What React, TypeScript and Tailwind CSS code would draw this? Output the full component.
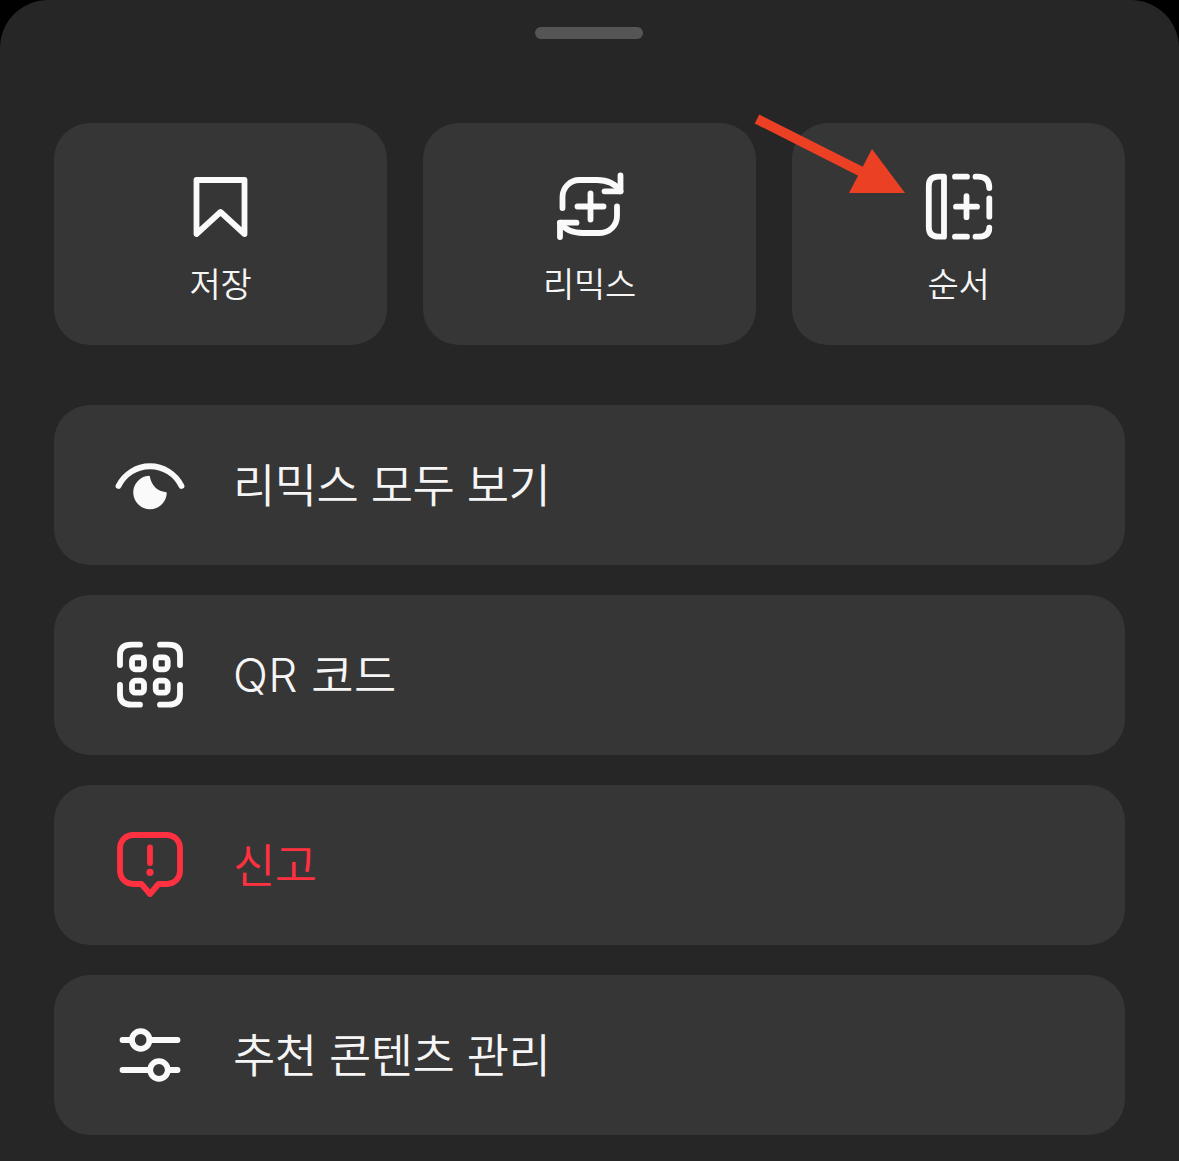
const SHEET_FONT = "font-['Inter','Noto_Sans_CJK_KR',sans-serif]";

function Icon({ children, color = "#fafafa" }: { children: React.ReactNode; color?: string }) {
  return (
    <svg
      viewBox="0 0 72 72"
      fill="none"
      stroke={color}
      strokeWidth="5.8"
      strokeLinecap="round"
      strokeLinejoin="round"
      className="w-[72px] h-[72px] shrink-0"
    >
      {children}
    </svg>
  );
}

const BookmarkIcon = () => (
  <Icon>
    <path d="M11.5 9H59.5V63L35.5 41L11.5 63Z" />
  </Icon>
);

const RemixIcon = () => (
  <Icon>
    <path d="M8.5 37V26A17 17 0 0 1 25.5 9H43Q59 9 66.5 20.3" />
    <path d="M66.5 4.5V20.3H50.5" />
    <path d="M63 35.5V45A17 17 0 0 1 46 62H29Q13 62 6 51.7" />
    <path d="M6 66V51.7H22.5" />
    <path d="M23.5 35.5H49.5M36.5 22.5V48.5" />
  </Icon>
);

const SequenceIcon = () => (
  <Icon>
    <path d="M21 5.7H15.5Q5.8 5.7 5.8 15V56Q5.8 65.7 15.5 65.7H21Z" />
    <path d="M32 5.7H44M32 65.7H44" />
    <path d="M52.5 5.7H55Q66.3 5.7 66.3 17" />
    <path d="M66.3 27.3V45.7" />
    <path d="M66.3 56.7Q66.3 65.7 55 65.7H52.5" />
    <path d="M33 35.7H54M43.5 25.2V46.2" />
  </Icon>
);

const EyeIcon = () => (
  <Icon>
    <path d="M4.5 37A35 35 0 0 1 67.5 37" />
    <path
      d="M35 27.5A16 16 0 1 0 52 44C42 43 37 37 35 27.5Z"
      fill="#fafafa"
      strokeWidth="1.5"
    />
  </Icon>
);

const QrIcon = () => (
  <Icon>
    <path d="M6 26V16Q6 5.7 17.7 5.7H26" />
    <path d="M46 5.7H54.5Q66 5.7 66 16V26" />
    <path d="M6 46V55.5Q6 65.7 17.7 65.7H26" />
    <path d="M46 65.7H54.5Q66 65.7 66 55.5V46" />
    <rect x="18" y="18.3" width="12" height="12" rx="3.5" />
    <rect x="41.7" y="18.3" width="12" height="12" rx="3.5" />
    <rect x="18" y="41.7" width="12" height="12" rx="3.5" />
    <rect x="41.7" y="41.7" width="12" height="12" rx="3.5" />
  </Icon>
);

const ReportIcon = () => (
  <Icon color="#ff3040">
    <path d="M19 6H53A13 13 0 0 1 66 19V42A13 13 0 0 1 53 55H44.5L36 65L27.5 55H19A13 13 0 0 1 6 42V19A13 13 0 0 1 19 6Z" />
    <path d="M36 18.5V34" />
    <circle cx="36" cy="43.3" r="3.6" fill="#ff3040" stroke="none" />
  </Icon>
);

const SlidersIcon = () => (
  <Icon>
    <path d="M8.5 21H17.8M35.6 21H63.5" />
    <circle cx="26.7" cy="21" r="8.8" />
    <path d="M8.5 51H36.1M53.9 51H63.5" />
    <circle cx="45" cy="51" r="8.8" />
  </Icon>
);

const TILES = [
  { label: "저장", icon: BookmarkIcon },
  { label: "리믹스", icon: RemixIcon },
  { label: "순서", icon: SequenceIcon },
];

const ROWS = [
  { label: "리믹스 모두 보기", icon: EyeIcon, color: "text-[#f5f5f5] tracking-[-0.55px]" },
  { label: "QR 코드", icon: QrIcon, color: "text-[#f5f5f5] tracking-[0.4px]" },
  { label: "신고", icon: ReportIcon, color: "text-[#ff3040] tracking-[-0.55px]" },
  { label: "추천 콘텐츠 관리", icon: SlidersIcon, color: "text-[#f5f5f5] tracking-[-0.55px]" },
];

export default function App() {
  return (
    <div className={`relative w-[1179px] h-[1161px] overflow-hidden bg-black ${SHEET_FONT}`}>
      <div className="h-full rounded-t-[48px] bg-[#262626] px-[54px]">
        {/* Drag handle */}
        <div className="flex justify-center pt-[27px] pr-px">
          <div className="w-[108px] h-3 rounded-full bg-[#555555]" />
        </div>

        {/* Quick actions */}
        <div className="mt-[84px] grid grid-cols-3 gap-9">
          {TILES.map(({ label, icon: TileIcon }) => (
            <div
              key={label}
              className="h-[222px] rounded-[36px] bg-[#363636] flex flex-col items-center pt-12"
            >
              <TileIcon />
              <span className="mt-[16px] text-[34px] leading-[52px] tracking-[-0.2px] font-[350] text-[#f5f5f5]">
                {label}
              </span>
            </div>
          ))}
        </div>

        {/* Menu rows */}
        <div className="mt-[60px] flex flex-col gap-[30px]">
          {ROWS.map(({ label, icon: RowIcon, color }) => (
            <div
              key={label}
              className="h-40 rounded-[36px] bg-[#363636] flex items-center gap-[47px] pl-[60px]"
            >
              <RowIcon />
              <span className={`text-[46px] leading-[60px] font-[350] ${color}`}>
                {label}
              </span>
            </div>
          ))}
        </div>
      </div>

      {/* Annotation arrow */}
      <svg
        viewBox="0 0 160 84"
        className="absolute left-[750px] top-[112px] w-[160px] h-[84px]"
      >
        <path d="M7 7L112 60" stroke="#ec4024" strokeWidth="10" />
        <path d="M122 37L155 81H99Z" fill="#ec4024" />
      </svg>
    </div>
  );
}
